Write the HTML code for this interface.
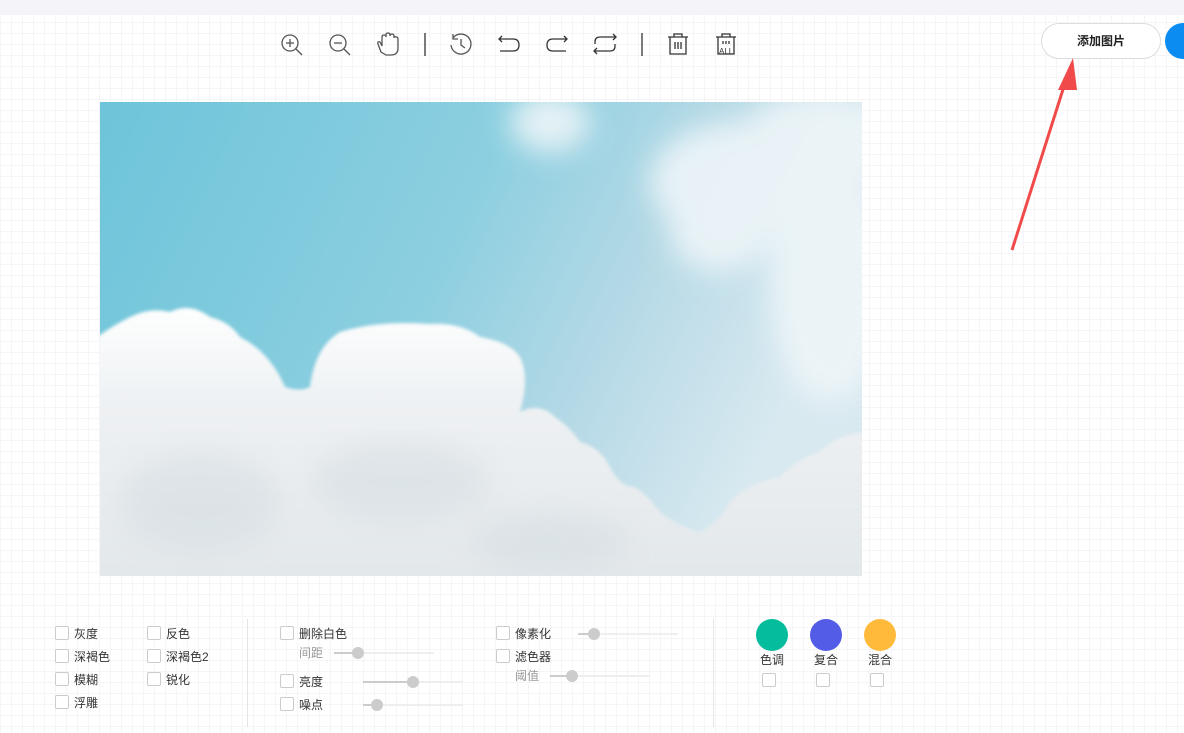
<!DOCTYPE html>
<html><head><meta charset="utf-8"><style>
*{margin:0;padding:0;box-sizing:border-box}
body{width:1184px;height:733px;overflow:hidden;position:relative;font-family:"Liberation Sans","Noto Sans CJK SC",sans-serif;font-size:12px;color:#333;
background-color:#fff;background-image:linear-gradient(#f5f5f7 1px,transparent 1px),linear-gradient(90deg,#f5f5f7 1px,transparent 1px);background-size:11px 11px}
.top{position:absolute;left:0;top:0;width:1184px;height:15px;background:#f5f5f9}
.btn{position:absolute;left:1041px;top:23px;width:120px;height:36px;border:1px solid #ddd;border-radius:18px;background:#fff;text-align:center;line-height:34px;font-size:12px;font-weight:bold;color:#222}
.blue{position:absolute;left:1165px;top:23px;width:40px;height:36px;border-radius:18px;background:#0a8cf0}
.cb{position:absolute;width:14px;height:14px;border:1px solid #ccc;background:#fff;border-radius:2px}
.lb{position:absolute;font-size:12px;color:#333;line-height:14px}
.g{color:#999}
.tr{position:absolute;height:2px;background:#eee}
.tf{position:absolute;height:2px;background:#ccc}
.th{position:absolute;width:12px;height:12px;border-radius:50%;background:#ccc}
.vl{position:absolute;width:1px;background:#e5e5e5}
.c{position:absolute;width:32px;height:32px;border-radius:50%}
</style></head><body>
<div class="top"></div>
<svg style="position:absolute;left:0;top:0" width="800" height="70" fill="none" stroke="#555" stroke-width="1.3">
<circle cx="290" cy="43" r="8"/><line x1="296" y1="49" x2="302" y2="55"/><line x1="286" y1="43" x2="294" y2="43"/><line x1="290" y1="39" x2="290" y2="47"/>
<circle cx="338" cy="43" r="8"/><line x1="344" y1="49" x2="350" y2="55"/><line x1="334" y1="43" x2="342" y2="43"/>
<path d="M381 52 L378 44 Q377 41 380 42 L382 46 V37 Q382 35 384 35 Q386 35 386 37 V35 Q386 33 388 33 Q390 33 390 35 V36 Q390 34 392 34 Q394 34 394 36 V38 Q394 36 396 37 Q398 37 398 39 V48 Q398 55 391 55 H386 Z"/>
<line x1="425" y1="33" x2="425" y2="56" stroke="#333"/>
<path d="M453 38 A10 10 0 1 1 451 45"/><path d="M453 34 V39 H458"/><path d="M461 39 V45 L465 48"/>
<path d="M502 36 L499 39 L502 42 M499 39 H513 Q519 39 519 45 Q519 51 513 51 H500" stroke="#333"/>
<path d="M564 36 L567 39 L564 42 M567 39 H553 Q547 39 547 45 Q547 51 553 51 H566" stroke="#333"/>
<path d="M613 34 L616 37 L613 40 M616 37 H600 Q595 37 595 42 V44 M597 54 L594 51 L597 48 M594 51 H610 Q615 51 615 46 V44" stroke="#333"/>
<line x1="642" y1="33" x2="642" y2="56" stroke="#333"/>
<path d="M668 37 H688 M674 37 V34 H682 V37 M670 37 V54 H686 V37 M675 42 V49 M678 42 V49 M681 42 V49" stroke="#333"/>
<path d="M716 37 H736 M722 37 V34 H730 V37 M718 37 V54 H734 V37 M723 41 V44 M726 41 V44 M729 41 V44" stroke="#333"/>
<text x="719" y="54" font-size="8" fill="#333" stroke="none" font-family="Liberation Sans">ALL</text>
</svg>
<div class="btn">添加图片</div><div class="blue"></div>
<svg style="position:absolute;left:1000px;top:50px" width="90" height="210"><line x1="12" y1="200" x2="66" y2="30" stroke="#f04a4a" stroke-width="3"/><polygon points="73,8 58,40 77,40" fill="#f04a4a"/></svg>
<svg style="position:absolute;left:100px;top:102px" width="762" height="474">
<defs><linearGradient id="s" x1="0" y1="0" x2="1" y2="0.3"><stop offset="0" stop-color="#6ec4da"/><stop offset=".5" stop-color="#8ccfe0"/><stop offset=".75" stop-color="#b5d9e6"/><stop offset="1" stop-color="#d8e9f0"/></linearGradient>
<filter id="b" x="-5%" y="-5%" width="110%" height="110%"><feGaussianBlur stdDeviation="1.5"/></filter><filter id="b2"><feGaussianBlur stdDeviation="14"/></filter>
<linearGradient id="cl" x1="0" y1="0" x2="0" y2="1"><stop offset="0" stop-color="#fdfefe"/><stop offset=".35" stop-color="#eef1f3"/><stop offset="1" stop-color="#e2e7ea"/></linearGradient></defs>
<rect width="762" height="474" fill="url(#s)"/>
<g filter="url(#b2)" fill="#eef5f8" opacity=".9"><ellipse cx="450" cy="20" rx="40" ry="30"/><ellipse cx="640" cy="80" rx="90" ry="60"/><ellipse cx="620" cy="130" rx="50" ry="40"/><ellipse cx="730" cy="180" rx="60" ry="120"/><ellipse cx="720" cy="40" rx="80" ry="50"/></g>
<path filter="url(#b)" fill="url(#cl)" d="M-10 240 Q10 225 30 215 Q50 205 70 210 Q90 200 110 215 Q130 220 140 235 Q170 250 185 285 Q200 290 210 285 Q215 245 240 230 Q280 218 330 222 Q360 220 380 235 Q410 240 420 255 Q430 275 420 310 Q440 300 455 315 Q470 325 480 340 Q500 345 510 365 Q520 385 535 385 Q550 395 560 410 Q580 425 600 430 Q620 420 630 400 Q650 380 680 375 Q700 355 720 350 Q740 330 772 330 V484 H-10 Z"/>
<g filter="url(#b2)" fill="#d3dce1" opacity=".5"><ellipse cx="100" cy="400" rx="80" ry="50"/><ellipse cx="300" cy="380" rx="90" ry="40"/><ellipse cx="450" cy="440" rx="80" ry="30"/></g>
</svg>
<div class="cb" style="left:55px;top:626px"></div><div class="lb" style="left:74px;top:627px">灰度</div>
<div class="cb" style="left:55px;top:649px"></div><div class="lb" style="left:74px;top:650px">深褐色</div>
<div class="cb" style="left:55px;top:672px"></div><div class="lb" style="left:74px;top:673px">模糊</div>
<div class="cb" style="left:55px;top:695px"></div><div class="lb" style="left:74px;top:696px">浮雕</div>
<div class="cb" style="left:147px;top:626px"></div><div class="lb" style="left:166px;top:627px">反色</div>
<div class="cb" style="left:147px;top:649px"></div><div class="lb" style="left:166px;top:650px">深褐色2</div>
<div class="cb" style="left:147px;top:672px"></div><div class="lb" style="left:166px;top:673px">锐化</div>
<div class="vl" style="left:247px;top:619px;height:108px"></div>
<div class="cb" style="left:280px;top:626px"></div><div class="lb" style="left:299px;top:627px">删除白色</div>
<div class="lb g" style="left:299px;top:646px">间距</div><div class="tr" style="left:334px;top:652px;width:100px"></div><div class="tf" style="left:334px;top:652px;width:24px"></div><div class="th" style="left:352px;top:647px"></div>
<div class="cb" style="left:280px;top:674px"></div><div class="lb" style="left:299px;top:675px">亮度</div>
<div class="tr" style="left:363px;top:681px;width:100px"></div><div class="tf" style="left:363px;top:681px;width:50px"></div><div class="th" style="left:407px;top:676px"></div>
<div class="cb" style="left:280px;top:697px"></div><div class="lb" style="left:299px;top:698px">噪点</div>
<div class="tr" style="left:363px;top:704px;width:100px"></div><div class="tf" style="left:363px;top:704px;width:14px"></div><div class="th" style="left:371px;top:699px"></div>
<div class="cb" style="left:496px;top:626px"></div><div class="lb" style="left:515px;top:627px">像素化</div>
<div class="tr" style="left:578px;top:633px;width:100px"></div><div class="tf" style="left:578px;top:633px;width:16px"></div><div class="th" style="left:588px;top:628px"></div>
<div class="cb" style="left:496px;top:649px"></div><div class="lb" style="left:515px;top:650px">滤色器</div>
<div class="lb g" style="left:515px;top:669px">阈值</div><div class="tr" style="left:550px;top:675px;width:100px"></div><div class="tf" style="left:550px;top:675px;width:22px"></div><div class="th" style="left:566px;top:670px"></div>
<div class="vl" style="left:713px;top:619px;height:108px"></div>
<div class="c" style="left:756px;top:619px;background:#05bc9c"></div><div class="lb" style="left:760px;top:653px">色调</div><div class="cb" style="left:762px;top:673px"></div>
<div class="c" style="left:810px;top:619px;background:#535ce6"></div><div class="lb" style="left:814px;top:653px">复合</div><div class="cb" style="left:816px;top:673px"></div>
<div class="c" style="left:864px;top:619px;background:#ffba3c"></div><div class="lb" style="left:868px;top:653px">混合</div><div class="cb" style="left:870px;top:673px"></div>
</body></html>
